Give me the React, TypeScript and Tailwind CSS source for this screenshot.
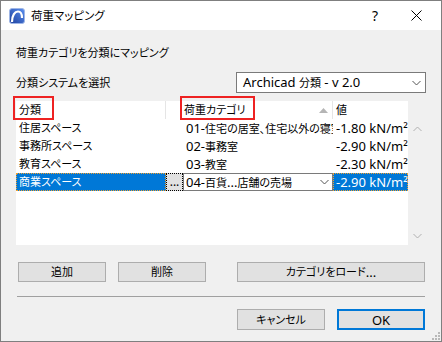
import React from 'react';

const rows = [
  { name: '住居スペース', num: '01-', cat: '住宅の居室、住宅以外の寝室', value: '-1.80 kN/m²' },
  { name: '事務所スペース', num: '02-', cat: '事務室', value: '-2.90 kN/m²' },
  { name: '教育スペース', num: '03-', cat: '教室', value: '-2.30 kN/m²' },
];

// latin text is drawn a bit larger than the kana/kanji so widths match the Windows UI font
const L: React.FC<{ children: React.ReactNode }> = ({ children }) => (
  <span className="text-[13px]">{children}</span>
);

const Chevron: React.FC<{ className?: string; up?: boolean }> = ({ className, up }) => (
  <svg width="9" height="6" viewBox="0 0 9 6" className={className}>
    <polyline
      points={up ? '0.5,5 4.5,1 8.5,5' : '0.5,1 4.5,5 8.5,1'}
      fill="none"
      stroke="currentColor"
      strokeWidth="1"
    />
  </svg>
);

const ArchicadIcon = () => (
  <svg width="16" height="16" viewBox="0 0 16 16">
    <defs>
      <linearGradient id="acg" x1="0" y1="1" x2="1" y2="0">
        <stop offset="0" stopColor="#1d3f9c" />
        <stop offset="1" stopColor="#5a8ff0" />
      </linearGradient>
    </defs>
    <rect x="0.5" y="0.5" width="15" height="15" rx="2.5" fill="url(#acg)" stroke="#9fb6e6" />
    <path d="M3 14 C3 7 6 3.5 9 3.5 C12 3.5 13 7 13 10" fill="none" stroke="#fff" strokeWidth="2.2" />
  </svg>
);

const Button: React.FC<{ children: React.ReactNode; className?: string }> = ({ children, className }) => (
  <div className={`flex items-center justify-center bg-[#e1e1e1] border border-[#adadad] ${className ?? ''}`}>
    {children}
  </div>
);

export default function App() {
  return (
    <div className="w-[442px] h-[342px] border border-[#7f7f7f] bg-[#f0f0f0] flex flex-col text-black font-['Noto_Sans','Noto_Sans_CJK_JP',sans-serif] [font-feature-settings:'palt'] text-[11px] leading-[16px] overflow-hidden">
      {/* title bar */}
      <div className="h-[29px] bg-white flex items-center shrink-0">
        <div className="ml-[8px]">
          <ArchicadIcon />
        </div>
        <span className="ml-[6px] text-[11.5px]">荷重マッピング</span>
        <span className="ml-auto text-[14px] mr-[33px]">?</span>
        <svg width="11" height="11" viewBox="0 0 11 11" className="mr-[19px]">
          <path d="M0.5 0.5 L10.5 10.5 M10.5 0.5 L0.5 10.5" stroke="#000" strokeWidth="1" />
        </svg>
      </div>

      {/* body */}
      <div className="flex-1 flex flex-col pl-[15px] pr-[15px] pt-[15px] relative">
        <div>荷重カテゴリを分類にマッピング</div>

        <div className="flex items-center mt-[11px] h-[21px]">
          <span>分類システムを選択</span>
          <div className="ml-auto w-[190px] h-[21px] bg-white border border-[#7a7a7a] flex items-center pl-[6px] pr-[4px]">
            <span className="whitespace-pre">
              <L>Archicad </L>分類<L> - v 2.0</L>
            </span>
            <Chevron className="ml-auto text-[#555]" />
          </div>
        </div>

        {/* list */}
        <div className="flex mt-[8px] h-[144px]">
          <div className="w-[392px] flex flex-col bg-white relative">
            {/* header */}
            <div className="h-[18px] flex items-center shrink-0">
              <div className="w-[150px] h-full flex items-center pl-[3px] border-r border-[#e5e5e5]">分類</div>
              <div className="w-[167px] h-full flex items-center pl-[18px] pr-[4px] border-r border-[#e5e5e5]">
                <span>荷重カテゴリ</span>
                <svg width="9" height="5" viewBox="0 0 9 5" className="ml-auto">
                  <polygon points="0,5 4.5,0 9,5" fill="#b5b5b5" />
                </svg>
              </div>
              <div className="flex-1 h-full flex items-center pl-[3px]">値</div>
            </div>
            {/* red annotation boxes */}
            <div className="absolute left-[-3px] top-[-5px] w-[41px] h-[24px] border-2 border-[#ee2222]" />
            <div className="absolute left-[164px] top-[-5px] w-[75px] h-[24px] border-2 border-[#ee2222]" />

            {rows.map((r) => (
              <div key={r.name} className="h-[18px] flex items-center shrink-0 whitespace-nowrap">
                <div className="w-[150px] pl-[3px] overflow-hidden">{r.name}</div>
                <div className="w-[167px] pl-[20px] overflow-hidden">
                  <L>{r.num}</L>
                  {r.cat}
                </div>
                <div className="w-[75px] pl-[3px] overflow-hidden">
                  <L>{r.value}</L>
                </div>
              </div>
            ))}
            {/* selected row */}
            <div className="h-[18px] flex shrink-0 whitespace-nowrap">
              <div className="w-[150px] h-full pl-[3px] flex items-center bg-[#0078d7] text-white outline-1 outline-dotted outline-[#f0a030] -outline-offset-1">
                商業スペース
              </div>
              <div className="w-[17px] h-full flex items-end justify-center pb-[2px] bg-[#e1e1e1] border border-dotted border-black leading-none text-[12px]">
                ...
              </div>
              <div className="w-[150px] h-full flex items-center bg-white border border-[#7a7a7a] pl-[2px] pr-[3px]">
                <span>
                  <L>04-</L>百貨<L>...</L>店舗の売場
                </span>
                <Chevron className="ml-auto text-[#555]" />
              </div>
              <div className="w-[75px] h-full pl-[3px] flex items-center bg-[#0078d7] text-white overflow-hidden outline-1 outline-dotted outline-[#f0a030] -outline-offset-1">
                <L>-2.90 kN/m²</L>
              </div>
            </div>
          </div>
          {/* scrollbar */}
          <div className="w-[18px] flex flex-col items-center justify-between pt-[25px] pb-[6px] text-[#b0b0b0]">
            <Chevron up />
            <Chevron />
          </div>
        </div>

        {/* action buttons */}
        <div className="flex mt-[17px] pl-[2px] pr-[1px]">
          <Button className="w-[88px] h-[20px]">追加</Button>
          <Button className="w-[88px] h-[20px] ml-[12px]">削除</Button>
          <Button className="w-[188px] h-[20px] ml-auto">
            カテゴリをロード<L>...</L>
          </Button>
        </div>

        <div className="h-px bg-[#a0a0a0] mt-[14px] ml-[1px] mr-[1px]" />

        <div className="flex justify-end mt-[12px] pr-[1px]">
          <Button className="w-[88px] h-[21px]">キャンセル</Button>
          <div className="w-[88px] h-[21px] ml-[12px] flex items-center justify-center bg-[#e1e1e1] border-2 border-[#0078d7]">
            <L>OK</L>
          </div>
        </div>

        {/* resize grip */}
        <svg width="8" height="8" viewBox="0 0 8 8" className="absolute right-[1px] bottom-[1px]">
          <rect x="6" y="0" width="2" height="2" fill="#b8b8b8" />
          <rect x="3" y="3" width="2" height="2" fill="#b8b8b8" />
          <rect x="6" y="3" width="2" height="2" fill="#b8b8b8" />
          <rect x="0" y="6" width="2" height="2" fill="#b8b8b8" />
          <rect x="3" y="6" width="2" height="2" fill="#b8b8b8" />
          <rect x="6" y="6" width="2" height="2" fill="#b8b8b8" />
        </svg>
      </div>
    </div>
  );
}
